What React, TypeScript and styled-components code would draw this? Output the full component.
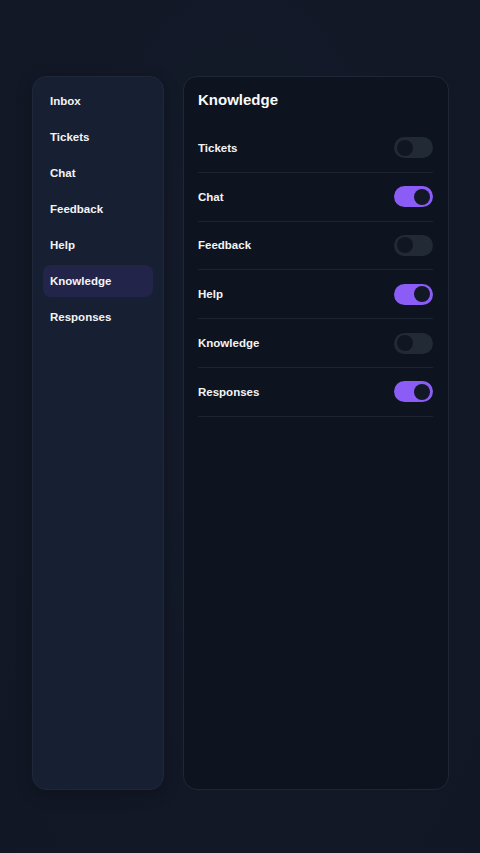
import React, { useState } from "react";
import styled, { createGlobalStyle } from "styled-components";

const GlobalStyle = createGlobalStyle`
  html, body {
    margin: 0;
    padding: 0;
    background: #121826;
  }
  * {
    box-sizing: border-box;
  }
`;

const Page = styled.div`
  display: grid;
  grid-template-columns: 132px 1fr;
  column-gap: 19px;
  height: 853px;
  padding: 76px 31px 63px 32px;
  background: radial-gradient(
    ellipse at 50% 40%,
    #141b2b 0%,
    #121826 60%,
    #111725 100%
  );
  font-family: "Liberation Sans", Arial, sans-serif;
  color: #f3f4f6;
`;

const Sidebar = styled.nav`
  display: flex;
  flex-direction: column;
  gap: 4px;
  padding: 8px 10px;
  background: #172033;
  border: 1px solid #1e2839;
  border-radius: 14px;
  box-shadow: 0 4px 16px rgba(0, 0, 0, 0.25);
`;

const NavItem = styled.div<{ $active?: boolean }>`
  display: flex;
  align-items: center;
  height: 32px;
  padding: 0 7px;
  border-radius: 8px;
  font-size: 11.5px;
  font-weight: 700;
  color: #f3f4f6;
  background: ${(p) => (p.$active ? "#222449" : "transparent")};
`;

const Panel = styled.section`
  display: flex;
  flex-direction: column;
  padding: 13px 15px 16px 14px;
  background: #0e1320;
  border: 1px solid #1f2737;
  border-radius: 14px;
`;

const Title = styled.h2`
  margin: 0 0 14px;
  font-size: 15px;
  line-height: 20px;
  font-weight: 700;
  color: #f9fafb;
`;

const Row = styled.div`
  display: flex;
  align-items: center;
  justify-content: space-between;
  height: 48.8px;
  border-bottom: 1px solid #1c2331;
  font-size: 11.5px;
  font-weight: 700;
  color: #f3f4f6;
`;

const Track = styled.button<{ $on: boolean }>`
  position: relative;
  width: 39px;
  height: 21px;
  padding: 0;
  border: none;
  border-radius: 11px;
  cursor: pointer;
  background: ${(p) => (p.$on ? "#8b5cf6" : "#222a36")};
`;

const Knob = styled.span<{ $on: boolean }>`
  position: absolute;
  top: 2.5px;
  left: ${(p) => (p.$on ? "20px" : "2.5px")};
  width: 16px;
  height: 16px;
  border-radius: 50%;
  background: ${(p) => (p.$on ? "#121826" : "#111722")};
`;

const navItems = [
  "Inbox",
  "Tickets",
  "Chat",
  "Feedback",
  "Help",
  "Knowledge",
  "Responses",
];

const initialSettings = [
  { name: "Tickets", on: false },
  { name: "Chat", on: true },
  { name: "Feedback", on: false },
  { name: "Help", on: true },
  { name: "Knowledge", on: false },
  { name: "Responses", on: true },
];

export default function App() {
  const [settings, setSettings] = useState(initialSettings);

  const toggle = (name: string) =>
    setSettings((s) => s.map((x) => (x.name === name ? { ...x, on: !x.on } : x)));

  return (
    <>
      <GlobalStyle />
      <Page>
        <Sidebar>
          {navItems.map((item) => (
            <NavItem key={item} $active={item === "Knowledge"}>
              {item}
            </NavItem>
          ))}
        </Sidebar>
        <Panel>
          <Title>Knowledge</Title>
          {settings.map((s) => (
            <Row key={s.name}>
              <span>{s.name}</span>
              <Track $on={s.on} onClick={() => toggle(s.name)} aria-pressed={s.on}>
                <Knob $on={s.on} />
              </Track>
            </Row>
          ))}
        </Panel>
      </Page>
    </>
  );
}
